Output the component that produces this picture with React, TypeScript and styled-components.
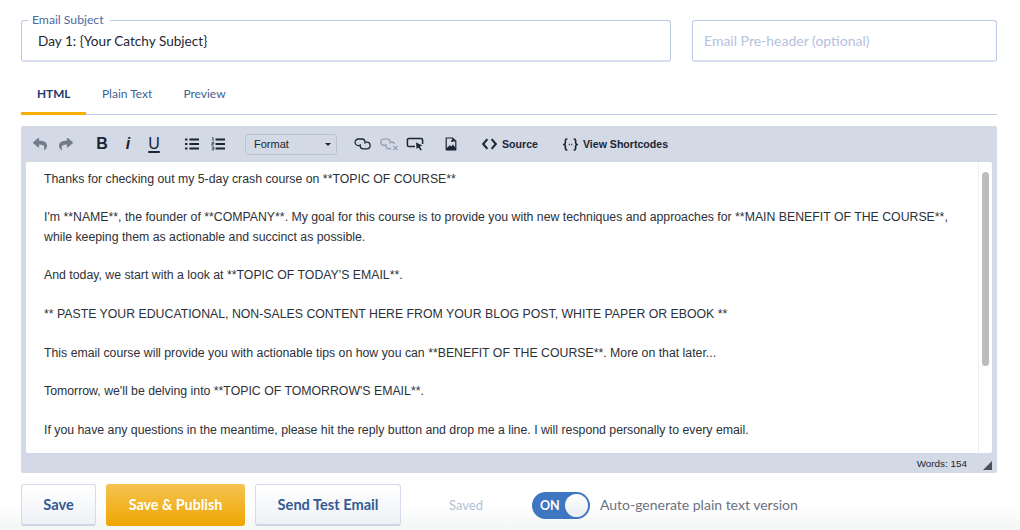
import React from "react";
import styled, { createGlobalStyle } from "styled-components";
import { FaReply, FaShare } from "react-icons/fa";

const GlobalStyle = createGlobalStyle`
  html, body {
    margin: 0;
    padding: 0;
    height: 530px;
    overflow: hidden;
    background: linear-gradient(to bottom, #ffffff 0, #ffffff 505px, #f4f5f5 530px);
    font-family: "Lato", "Liberation Sans", sans-serif;
  }
`;

const paragraphs = [
  "Thanks for checking out my 5-day crash course on **TOPIC OF COURSE**",
  "I'm **NAME**, the founder of **COMPANY**. My goal for this course is to provide you with new techniques and approaches for **MAIN BENEFIT OF THE COURSE**, while keeping them as actionable and succinct as possible.",
  "And today, we start with a look at **TOPIC OF TODAY'S EMAIL**.",
  "** PASTE YOUR EDUCATIONAL, NON-SALES CONTENT HERE FROM YOUR BLOG POST, WHITE PAPER OR EBOOK **",
  "This email course will provide you with actionable tips on how you can **BENEFIT OF THE COURSE**. More on that later...",
  "Tomorrow, we'll be delving into **TOPIC OF TOMORROW'S EMAIL**.",
  "If you have any questions in the meantime, please hit the reply button and drop me a line. I will respond personally to every email.",
];

const LinkIcon = () => (
  <svg width="20" height="14" viewBox="0 0 20 14" fill="none" stroke="#1b2536" strokeWidth="1.3">
    <path d="M7 8.6H5.4a3.3 3.3 0 0 1 0-6.6h3.4a3.3 3.3 0 0 1 3.2 3.3c0 .5-.1.9-.3 1.3" />
    <path d="M12.4 5.2h1.4a3.3 3.3 0 0 1 0 6.6h-3.4a3.3 3.3 0 0 1-3.2-3.3c0-.5.1-.9.3-1.3" />
  </svg>
);

const UnlinkIcon = () => (
  <svg width="20" height="14" viewBox="0 0 20 14" fill="none" stroke="#8f99ac" strokeWidth="1.2">
    <path d="M7 8.4H5a3.2 3.2 0 0 1 0-6.4h3.2a3.2 3.2 0 0 1 3.1 3.2c0 .5-.1.9-.3 1.3" />
    <path d="M12 5.2h.8c1.4 0 2.4.8 2.8 1.9M12 11.8H10a3.2 3.2 0 0 1-3.1-3.2c0-.5.1-.9.3-1.3" />
    <path d="M14.4 9.2l4 4M18.4 9.2l-4 4" strokeWidth="1.1" />
  </svg>
);

const TargetIcon = () => (
  <svg width="18" height="14" viewBox="0 0 18 14" fill="none">
    <path d="M9 9.5H3a1.6 1.6 0 0 1-1.6-1.6V3A1.6 1.6 0 0 1 3 1.4h12A1.6 1.6 0 0 1 16.6 3v4" stroke="#1b2536" strokeWidth="1.5" />
    <path d="M10 5.6l6.4 3-2.6 1 2 3.2-1.4.8-1.8-3.2-2 1.6z" fill="#1b2536" />
  </svg>
);

const ImageIcon = () => (
  <svg width="12" height="14" viewBox="0 0 12 14">
    <path d="M.6 1.2A.8.8 0 0 1 1.4.4h6.4l3.6 3.4v9a.8.8 0 0 1-.8.8H1.4a.8.8 0 0 1-.8-.8z" fill="#1b2536" />
    <path d="M1.8 1.6h5.4v3h3v6L8 7.4 6.2 9.6 4.8 8.2 1.8 11z" fill="#d3d9e5" />
    <circle cx="7" cy="4" r="1" fill="#1b2536" />
  </svg>
);

const BulletIcon = () => (
  <svg width="14" height="12" viewBox="0 0 14 12" fill="#1b2536">
    <rect x="0" y="0.5" width="2.4" height="2" />
    <rect x="0" y="5" width="2.4" height="2" />
    <rect x="0" y="9.5" width="2.4" height="2" />
    <rect x="4.4" y="0.5" width="9.6" height="2" />
    <rect x="4.4" y="5" width="9.6" height="2" />
    <rect x="4.4" y="9.5" width="9.6" height="2" />
  </svg>
);

const NumberIcon = () => (
  <svg width="14" height="14" viewBox="0 0 14 14" fill="none" stroke="#1b2536">
    <path d="M1 .8h1.1v3.4" strokeWidth=".8" />
    <path d="M.6 5.4h2.2v1.3H.8V8h2.2" strokeWidth=".7" />
    <path d="M.6 9.9h2.2v1.5H1.2M2.8 11.4v1.5H.6" strokeWidth=".7" />
    <path d="M4.6 2.4H14M4.6 7H14M4.6 11.6H14" strokeWidth="2" />
  </svg>
);

const CodeIcon = () => (
  <svg width="15" height="12" viewBox="0 0 15 12" fill="none" stroke="#1b2536" strokeWidth="2">
    <path d="M5.4 1.2L1.2 6l4.2 4.8M9.6 1.2L13.8 6l-4.2 4.8" />
  </svg>
);

const ShortcodeIcon = () => (
  <svg width="15" height="13" viewBox="0 0 15 13" fill="none" stroke="#1b2536" strokeWidth="1.6">
    <path d="M4.4 1H3.6c-.9 0-1.2.5-1.2 1.4v2.2c0 1-.4 1.6-1.4 1.9 1 .3 1.4.9 1.4 1.9v2.2c0 .9.3 1.4 1.2 1.4h.8" />
    <path d="M10.6 1h.8c.9 0 1.2.5 1.2 1.4v2.2c0 1 .4 1.6 1.4 1.9-1 .3-1.4.9-1.4 1.9v2.2c0 .9-.3 1.4-1.2 1.4h-.8" />
    <path d="M5.8 6.5h1M8.2 6.5h1" />
  </svg>
);

export default function App() {
  return (
    <>
      <GlobalStyle />
      <Page>
        <FieldRow>
          <SubjectField>
            <FieldLegend>Email Subject</FieldLegend>
            <FieldValue>Day 1: {"{Your Catchy Subject}"}</FieldValue>
          </SubjectField>
          <PreheaderField>Email Pre-header (optional)</PreheaderField>
        </FieldRow>

        <Tabs>
          <Tab $active>HTML</Tab>
          <Tab>Plain Text</Tab>
          <Tab>Preview</Tab>
        </Tabs>

        <Editor>
          <Toolbar>
            <ToolGroup>
              <ToolButton $muted><FaReply size={14} /></ToolButton>
              <ToolButton $muted><FaShare size={14} /></ToolButton>
            </ToolGroup>
            <ToolGroup $gap={10}>
              <ToolButton><BoldGlyph>B</BoldGlyph></ToolButton>
              <ToolButton><ItalicGlyph>i</ItalicGlyph></ToolButton>
              <ToolButton><UnderGlyph>U</UnderGlyph></ToolButton>
            </ToolGroup>
            <ToolGroup $gap={12}>
              <ToolButton><BulletIcon /></ToolButton>
              <ToolButton><NumberIcon /></ToolButton>
            </ToolGroup>
            <FormatSelect>
              Format
              <Caret />
            </FormatSelect>
            <ToolGroup $gap={13}>
              <ToolButton><LinkIcon /></ToolButton>
              <ToolButton><UnlinkIcon /></ToolButton>
              <ToolButton><TargetIcon /></ToolButton>
            </ToolGroup>
            <ToolGroup $gap={10}>
              <ToolButton><ImageIcon /></ToolButton>
            </ToolGroup>
            <TextTool $gap={18} $iconGap={5}><CodeIcon />Source</TextTool>
            <TextTool $gap={25} $iconGap={5}><ShortcodeIcon />View Shortcodes</TextTool>
          </Toolbar>

          <EditorBody>
            <Content>
              {paragraphs.map((text) => (
                <Paragraph key={text}>{text}</Paragraph>
              ))}
            </Content>
            <ScrollTrack>
              <ScrollThumb />
            </ScrollTrack>
          </EditorBody>

          <StatusBar>
            <WordCount>Words: 154</WordCount>
            <Resizer />
          </StatusBar>
        </Editor>

        <Actions>
          <ActionButton>Save</ActionButton>
          <PublishButton>Save &amp; Publish</PublishButton>
          <TestButton>Send Test Email</TestButton>
          <SavedNote>Saved</SavedNote>
          <Toggle>
            ON
            <Knob />
          </Toggle>
          <ToggleLabel>Auto-generate plain text version</ToggleLabel>
        </Actions>
      </Page>
    </>
  );
}

const Page = styled.div`
  width: 976px;
  margin-left: 21px;
  padding-top: 14px;
`;

const FieldRow = styled.div`
  display: flex;
  align-items: flex-end;
  justify-content: space-between;
`;

const SubjectField = styled.fieldset`
  box-sizing: border-box;
  width: 650px;
  height: 48px;
  margin: 0;
  padding: 0 16px;
  border: 1px solid #bccae6;
  border-bottom: 2px solid #d6deef;
  border-radius: 3px;
`;

const FieldLegend = styled.legend`
  margin-left: -10px;
  padding: 0 6px 0 4px;
  font-size: 12.2px;
  line-height: 12px;
  color: #4b6a9e;
`;

const FieldValue = styled.div`
  padding-top: 5px;
  font-size: 13.6px;
  line-height: 20px;
  color: #1f2733;
`;

const PreheaderField = styled.div`
  box-sizing: border-box;
  width: 305px;
  height: 42px;
  padding: 0 11px;
  border: 1px solid #bccae6;
  border-bottom: 2px solid #d6deef;
  border-radius: 3px;
  font-size: 14px;
  line-height: 39px;
  color: #b4c2de;
`;

const Tabs = styled.div`
  display: flex;
  height: 53px;
  box-sizing: border-box;
  border-bottom: 1px solid #bccae6;
`;

const Tab = styled.div<{ $active?: boolean }>`
  box-sizing: border-box;
  height: 53px;
  padding: 0 ${(p) => (p.$active ? "16px" : "15.5px")};
  font-size: ${(p) => (p.$active ? "11.8px" : "12px")};
  font-weight: ${(p) => (p.$active ? 700 : 400)};
  line-height: 64px;
  color: ${(p) => (p.$active ? "#1d3a6e" : "#3f5f92")};
  border-bottom: ${(p) => (p.$active ? "3px solid #f9ae00" : "none")};
`;

const Editor = styled.div`
  margin-top: 11px;
  background: #d3d9e5;
  border-radius: 2px;
`;

const Toolbar = styled.div`
  display: flex;
  align-items: center;
  height: 36px;
  padding-left: 6px;
`;

const ToolGroup = styled.div<{ $gap?: number }>`
  display: flex;
  margin-left: ${(p) => p.$gap ?? 0}px;
`;

const ToolButton = styled.div<{ $muted?: boolean }>`
  display: flex;
  align-items: center;
  justify-content: center;
  width: 26px;
  height: 24px;
  color: ${(p) => (p.$muted ? "#737c8c" : "#1b2536")};
`;

const BoldGlyph = styled.span`
  font-family: "Liberation Sans", sans-serif;
  font-size: 16px;
  font-weight: 700;
`;

const ItalicGlyph = styled(BoldGlyph)`
  font-style: italic;
`;

const UnderGlyph = styled.span`
  font-family: "Liberation Sans", sans-serif;
  font-size: 16px;
  text-decoration: underline;
  text-decoration-thickness: 1.5px;
  text-underline-offset: 2px;
`;

const FormatSelect = styled.div`
  box-sizing: border-box;
  position: relative;
  width: 92px;
  height: 21px;
  margin-left: 14px;
  padding-left: 8px;
  border: 1px solid #b9c3d8;
  border-radius: 3px;
  font-family: "Liberation Sans", sans-serif;
  font-size: 11px;
  line-height: 19px;
  color: #1b2536;
`;

const Caret = styled.span`
  position: absolute;
  right: 5px;
  top: 8px;
  border-left: 3px solid transparent;
  border-right: 3px solid transparent;
  border-top: 3px solid #1b2536;
`;

const TextTool = styled.div<{ $gap: number; $iconGap: number }>`
  display: flex;
  align-items: center;
  gap: ${(p) => p.$iconGap}px;
  margin-left: ${(p) => p.$gap}px;
  font-family: "Liberation Sans", sans-serif;
  font-size: 10.6px;
  font-weight: 700;
  color: #1b2536;
`;

const EditorBody = styled.div`
  display: flex;
  height: 291px;
  margin: 0 5px;
  background: #fff;
  border-radius: 2px;
  overflow: hidden;
`;

const Content = styled.div`
  flex: 1;
  padding: 7.5px 18px 0;
  font-family: "Liberation Sans", sans-serif;
  font-size: 12.3px;
  line-height: 19.35px;
  color: #2c3138;
`;

const Paragraph = styled.p`
  margin: 0 0 19.35px;
`;

const ScrollTrack = styled.div`
  box-sizing: border-box;
  flex: none;
  width: 14px;
  padding: 10px 3px 0 3px;
  border-left: 1px solid #eceef2;
`;

const ScrollThumb = styled.div`
  width: 7px;
  height: 194px;
  background: #bcbcbc;
  border-radius: 4px;
`;

const StatusBar = styled.div`
  display: flex;
  align-items: center;
  justify-content: flex-end;
  height: 20px;
  padding-right: 5px;
`;

const WordCount = styled.span`
  margin-right: 16px;
  font-family: "Liberation Sans", sans-serif;
  font-size: 9.9px;
  color: #1b2536;
`;

const Resizer = styled.span`
  width: 0;
  height: 0;
  margin-top: 4px;
  border-left: 9px solid transparent;
  border-bottom: 9px solid #4a505c;
`;

const Actions = styled.div`
  display: flex;
  align-items: center;
  margin-top: 11px;
  height: 42px;
`;

const ActionButton = styled.div`
  box-sizing: border-box;
  width: 75px;
  height: 42px;
  border: 1px solid #d5dcea;
  border-bottom: 2px solid #ccd5e6;
  border-radius: 3px;
  background: linear-gradient(to bottom, #ffffff, #eef1f6);
  font-size: 14.6px;
  font-weight: 700;
  line-height: 39px;
  text-align: center;
  color: #345a94;
`;

const TestButton = styled(ActionButton)`
  width: 146px;
  margin-left: 10px;
`;

const PublishButton = styled(ActionButton)`
  width: 139px;
  margin-left: 10px;
  border: none;
  background: linear-gradient(to bottom, #f5c353, #efa600);
  font-size: 14.3px;
  line-height: 42px;
  color: #fff;
`;

const SavedNote = styled.span`
  margin-left: 48px;
  font-size: 13px;
  color: #b3c0d8;
`;

const Toggle = styled.div`
  position: relative;
  box-sizing: border-box;
  width: 58px;
  height: 27px;
  margin-left: 49px;
  padding-left: 8px;
  background: #3f76c2;
  border-radius: 14px;
  font-size: 12.5px;
  font-weight: 700;
  line-height: 27px;
  color: #fff;
`;

const Knob = styled.span`
  position: absolute;
  right: 2px;
  top: 2px;
  width: 23px;
  height: 23px;
  border-radius: 50%;
  background: linear-gradient(to bottom, #ffffff, #e9ecf2);
`;

const ToggleLabel = styled.span`
  margin-left: 10px;
  margin-bottom: 2px;
  font-size: 14px;
  color: #6b7280;
`;
